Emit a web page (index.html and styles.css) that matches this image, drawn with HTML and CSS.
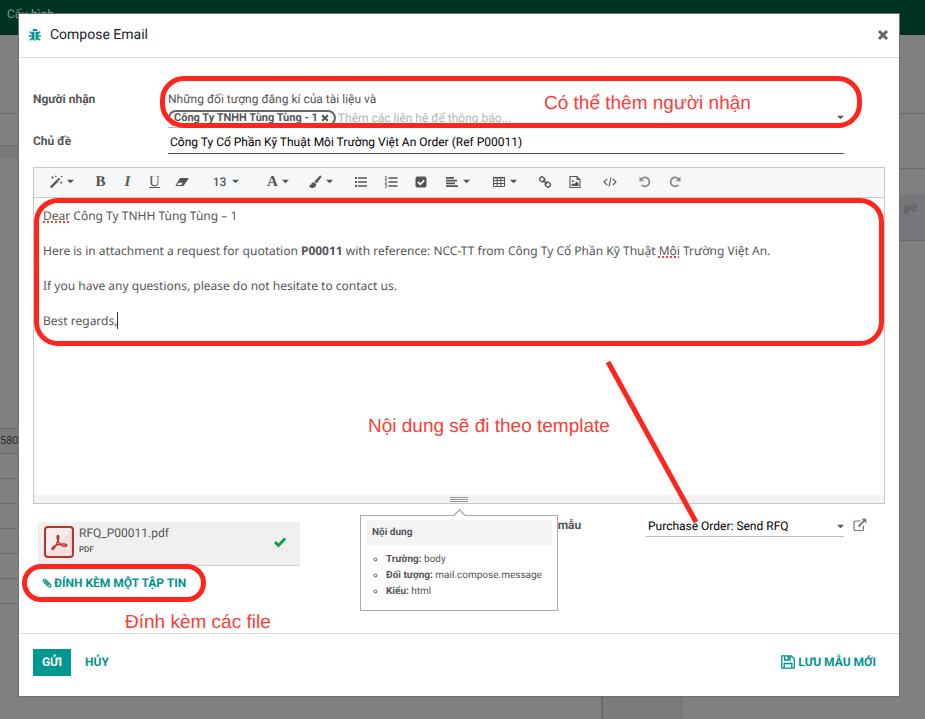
FILE: index.html
```html
<!DOCTYPE html>
<html lang="vi">
<head>
  <meta charset="UTF-8">
  <meta name="viewport" content="width=device-width, initial-scale=1.0">
  <title>Compose Email</title>
  <link rel="stylesheet" href="styles.css">
</head>
<body>
  <svg class="sprite" aria-hidden="true">
    <symbol id="bug" viewBox="0 0 14 14">
      <path d="M4.400 3.300a2.600 2.600 0 0 1 5.200 0z" fill="currentColor"/>
      <path d="M3.600 4h2.900v8.600C4.500 12.400 3.600 11 3.600 9zM7.500 4h2.900v5c0 2-.9 3.400-2.900 3.600z" fill="currentColor"/>
      <path d="M3.700 5.500L1.800 3.400M3.600 8H1M4 10.200l-2 2.100M10.300 5.500l1.900-2.100M10.400 8H13M10 10.200l2 2.100" stroke="currentColor" stroke-width="1.500" fill="none"/>
    </symbol>
    <symbol id="times" viewBox="0 0 14 14">
      <path d="M3 3l8 8M11 3l-8 8" stroke="currentColor" stroke-width="3" fill="none"/>
    </symbol>
    <symbol id="caret" viewBox="0 0 8 5">
      <path d="M0 .5h8l-4 4z" fill="currentColor"/>
    </symbol>
    <symbol id="magic" viewBox="0 0 14 14">
      <path d="M1 11.600L9.800 2.800l1.600 1.600-8.800 8.800z" fill="currentColor"/>
      <path d="M8.300 4.700l1.400 1.400" stroke="#f5f7f9" stroke-width=".8"/>
      <path d="M3.500 1.200v2.600M2.200 2.500h2.600M6.700.6v1.600M5.900 1.400h1.600M12.300 6.500v2.200M11.200 7.600h2.200M12.600.8v1.600M11.800 1.600h1.600" stroke="currentColor" stroke-width=".8"/>
    </symbol>
    <symbol id="eraser" viewBox="0 0 14 14">
      <path d="M5.400 3h7.400c.5 0 .8.500.5.900L9 10.300c-.2.400-.6.700-1 .7H1.200c-.5 0-.8-.500-.5-.9l3.900-6.400c.2-.4.400-.7.800-.7z" fill="currentColor"/>
      <path d="M1.900 10l1.500-2.300h4.200L6.200 10z" fill="#f5f7f9"/>
    </symbol>
    <symbol id="brush" viewBox="0 0 14 14">
      <path d="M12.800.7c.8.500.6 1.300.1 2L8.800 8.300 6.200 6.700l4.900-5.300c.5-.6 1.100-1 1.700-.7zM5.500 7.300l2.700 1.600c.2 2.600-1.600 4-4 4-1.800 0-3-.9-3.500-2.600 1.600.6 2.300-.3 2.600-1.200.4-1.100 1.100-1.800 2.200-1.800z" fill="currentColor"/>
    </symbol>
    <symbol id="list-ul" viewBox="0 0 14 14">
      <path d="M4 3h9M4 7h9M4 11h9" stroke="currentColor" stroke-width="1.600"/>
      <path d="M1 3h2M1 7h2M1 11h2" stroke="currentColor" stroke-width="2"/>
    </symbol>
    <symbol id="list-ol" viewBox="0 0 14 14">
      <path d="M4.500 3h9M4.500 7h9M4.500 11h9" stroke="currentColor" stroke-width="1.600"/>
      <path d="M1 1.700l1-.7v3.500M.8 4.400h2.300M.9 5.900c.7-.6 1.800-.2 1.600.6-.1.500-1.500 1.200-1.500 1.800h2M.9 9.800h1.800l-1 1.200c1.600 0 1.200 2-.9 1.600" stroke="currentColor" stroke-width=".8" fill="none"/>
    </symbol>
    <symbol id="check-square" viewBox="0 0 14 14">
      <rect x="1.500" y="1.500" width="11" height="11" rx="2" fill="currentColor"/>
      <path d="M4 7l2.300 2.300L10.200 5.300" stroke="#f5f7f9" stroke-width="1.800" fill="none"/>
    </symbol>
    <symbol id="align-left" viewBox="0 0 14 14">
      <path d="M1 2.800h8M1 5.600h11M1 8.400h9M1 11.200h12" stroke="currentColor" stroke-width="1.700"/>
    </symbol>
    <symbol id="table" viewBox="0 0 14 14">
      <path d="M1.500 2.500h11v9h-11zM1.500 5.500h11M1.500 8.500h11M5.200 2.500v9M8.800 2.500v9" stroke="currentColor" fill="none"/>
      <path d="M1.500 2.700h11" stroke="currentColor" stroke-width="1.600"/>
    </symbol>
    <symbol id="link" viewBox="0 0 14 14">
      <g stroke="currentColor" stroke-width="1.400" fill="none">
        <rect x="1.600" y="2.200" width="5.200" height="4.400" rx="2" transform="rotate(45 4.200 4.400)"/>
        <rect x="7.200" y="7.400" width="5.200" height="4.400" rx="2" transform="rotate(45 9.800 9.600)"/>
        <path d="M5 5l4 4"/>
      </g>
    </symbol>
    <symbol id="image" viewBox="0 0 14 14">
      <path d="M2 1.500h7l3 3v8H2zM9 1.500v3h3" stroke="currentColor" stroke-width="1.100" fill="none"/>
      <path d="M3.500 11V9.500l1.400-1.300 1.200 1L8.600 6.600l2 2V11z" fill="currentColor"/>
      <circle cx="4.800" cy="6" r="1" fill="currentColor"/>
    </symbol>
    <symbol id="code" viewBox="0 0 14 14">
      <path d="M4.200 3.800L1 7l3.200 3.200M9.800 3.800L13 7l-3.200 3.200M8 2.500l-2 9" stroke="currentColor" stroke-width="1.100" fill="none"/>
    </symbol>
    <symbol id="undo" viewBox="0 0 14 14">
      <path d="M3.300 4.200A4.500 4.500 0 1 1 3.600 10" stroke="currentColor" stroke-width="1.700" fill="none"/>
      <path d="M1.500 1.500v4.700h4.700z" fill="currentColor"/>
    </symbol>
    <symbol id="redo" viewBox="0 0 14 14">
      <path d="M10.700 4.200A4.500 4.500 0 1 0 10.400 10" stroke="currentColor" stroke-width="1.700" fill="none"/>
      <path d="M12.500 1.500v4.700H7.800z" fill="currentColor"/>
    </symbol>
    <symbol id="check" viewBox="0 0 14 14">
      <path d="M2 7l3.400 3.400L12.200 3.600" stroke="currentColor" stroke-width="2.800" fill="none"/>
    </symbol>
    <symbol id="clip" viewBox="0 0 12 12">
      <path d="M8.200 8.500L4 4.300c-.8-.8.300-1.900 1.100-1.100l4.900 4.900c1.700 1.700-.6 4-2.300 2.300L2.100 4.800C.2 2.800 2.700.3 4.700 2.200l5.400 5.400" stroke="currentColor" stroke-width="1.300" fill="none"/>
    </symbol>
    <symbol id="external" viewBox="0 0 14 14">
      <path d="M7.500 3H2.600C1.700 3 1 3.700 1 4.600v6.300c0 .9.700 1.600 1.600 1.600h6.300c.9 0 1.600-.7 1.600-1.600V7.800" stroke="currentColor" stroke-width="1.200" fill="none"/>
      <path d="M5.500 8.500l5.800-5.800" stroke="currentColor" stroke-width="1.800"/>
      <path d="M8.500.8h4.800v4.800z" fill="currentColor"/>
    </symbol>
    <symbol id="save" viewBox="0 0 14 14">
      <path d="M.8.800h9.400l3 3v9.400H.8zM3.200 13V8.500h7.600V13M3.600 1v4h5.600V1" stroke="currentColor" stroke-width="1.300" fill="none"/>
      <path d="M6.600 1h1.800v3H6.600z" fill="currentColor"/>
    </symbol>
  </svg>

  <div class="page">
    <nav class="navbar"><a href="#">Cấu hình</a></nav>
    <div class="page-body">
      <section class="sheet">
        <div class="sheet-bar"></div>
        <div class="sheet-status"></div>
        <div class="sheet-form"></div>
        <div class="line line-head">580,</div>
        <div class="line"></div>
        <div class="line"></div>
        <div class="line"></div>
        <div class="line"></div>
        <div class="line"></div>
        <div class="line"></div>
      </section>
      <div class="sheet-edge"></div>
      <aside class="chatter">
        <div class="chatter-bar"></div>
        <div class="chatter-tabs"></div>
        <div class="chatter-note">Bây giờ</div>
      </aside>
    </div>
  </div>

  <div class="backdrop">
    <div class="modal" role="dialog" aria-labelledby="modal-title">
      <header class="modal-header">
        <svg class="icon bug"><use href="#bug"/></svg>
        <h1 id="modal-title">Compose Email</h1>
        <button class="close" type="button" aria-label="Đóng"><svg class="icon"><use href="#times"/></svg></button>
      </header>

      <main class="modal-body">
        <div class="field-row recipients-row">
          <label for="recipients">Người nhận</label>
          <div class="field recipients">
            <p>Những đối tượng đăng kí của tài liệu và</p>
            <div class="tags">
              <span class="tag">Công Ty TNHH Tùng Tùng - 1 <svg class="tag-x"><use href="#times"/></svg></span>
              <input id="recipients" type="text" placeholder="Thêm các liên hệ để thông báo...">
              <svg class="caret"><use href="#caret"/></svg>
            </div>
          </div>
        </div>
        <div class="field-row">
          <label for="subject">Chủ đề</label>
          <input id="subject" class="field subject" type="text" value="Công Ty Cổ Phần Kỹ Thuật Môi Trường Việt An Order (Ref P00011)">
        </div>

        <div class="editor">
          <div class="toolbar">
            <div class="tools">
              <button class="menu" type="button" aria-label="Style"><svg class="icon"><use href="#magic"/></svg><svg class="caret"><use href="#caret"/></svg></button>
            </div>
            <div class="tools letters">
              <button type="button"><b>B</b></button>
              <button type="button"><b><i>I</i></b></button>
              <button type="button"><u>U</u></button>
              <button type="button" aria-label="Eraser"><svg class="icon"><use href="#eraser"/></svg></button>
            </div>
            <div class="tools">
              <button class="size" type="button">13<svg class="caret"><use href="#caret"/></svg></button>
            </div>
            <div class="tools">
              <button class="menu serif" type="button"><b>A</b><svg class="caret"><use href="#caret"/></svg></button>
              <button class="menu" type="button" aria-label="Background"><svg class="icon"><use href="#brush"/></svg><svg class="caret"><use href="#caret"/></svg></button>
            </div>
            <div class="tools">
              <button type="button" aria-label="List"><svg class="icon"><use href="#list-ul"/></svg></button>
              <button type="button" aria-label="Ordered list"><svg class="icon"><use href="#list-ol"/></svg></button>
              <button type="button" aria-label="Checklist"><svg class="icon"><use href="#check-square"/></svg></button>
              <button class="menu" type="button" aria-label="Align"><svg class="icon"><use href="#align-left"/></svg><svg class="caret"><use href="#caret"/></svg></button>
            </div>
            <div class="tools">
              <button class="menu" type="button" aria-label="Table"><svg class="icon"><use href="#table"/></svg><svg class="caret"><use href="#caret"/></svg></button>
            </div>
            <div class="tools">
              <button type="button" aria-label="Link"><svg class="icon"><use href="#link"/></svg></button>
              <button type="button" aria-label="Image"><svg class="icon"><use href="#image"/></svg></button>
            </div>
            <div class="tools">
              <button type="button" aria-label="Code"><svg class="icon"><use href="#code"/></svg></button>
            </div>
            <div class="tools history">
              <button type="button" aria-label="Undo"><svg class="icon"><use href="#undo"/></svg></button>
              <button type="button" aria-label="Redo"><svg class="icon"><use href="#redo"/></svg></button>
            </div>
          </div>
          <div class="editable" contenteditable="true" spellcheck="false">
            <p><span class="typo">Dear</span> Công Ty TNHH Tùng Tùng – 1</p>
            <p>Here is in attachment a request for quotation <b>P00011</b> with reference: NCC-TT from Công Ty Cổ Phần Kỹ Thuật <span class="typo">Môi</span> Trường Việt An.</p>
            <p>If you have any questions, please do not hesitate to contact us.</p>
            <p><span class="cursor">Best regards,</span></p>
          </div>
          <div class="resize"><span></span></div>
        </div>

        <div class="bottom">
          <div class="attachments">
            <div class="file">
              <svg class="pdf" viewBox="0 0 30 32">
                <rect x="1" y="1" width="28" height="30" rx="3" fill="#f7eceb"/>
                <path d="M2 29L28 4v24l-2 2H3z" fill="#f5dfde"/>
                <rect x="1" y="1" width="28" height="30" rx="3" fill="none" stroke="#b7342c" stroke-width="2"/>
                <path d="M14 9.500c-1.600 0-.8 3.800.6 6.500 1.500 3 4.600 4.500 7 4.300 2.200-.2 1.200-2.400-2.200-2.300-4 .1-8.300 1.400-10.300 3-2.300 1.900-.9 3.500.9 1.200 2-2.500 3.800-6.300 4.500-9.300.5-2.200.3-3.400-.5-3.400z" fill="none" stroke="#b7342c" stroke-width="1.500"/>
              </svg>
              <div class="file-info">
                <span>RFQ_P00011.pdf</span>
                <small>PDF</small>
              </div>
              <svg class="icon done"><use href="#check"/></svg>
            </div>
            <button class="attach" type="button"><svg class="clip"><use href="#clip"/></svg>ĐÍNH KÈM MỘT TẬP TIN</button>
          </div>
          <div class="template">
            <label for="template">Sử dụng mẫu</label>
            <div class="template-field">
              <input id="template" type="text" value="Purchase Order: Send RFQ">
              <svg class="caret"><use href="#caret"/></svg>
            </div>
            <button type="button" aria-label="Mở"><svg class="icon"><use href="#external"/></svg></button>
          </div>
        </div>
      </main>

      <footer class="modal-footer">
        <button class="send" type="button">GỬI</button>
        <button class="cancel" type="button">HỦY</button>
        <button class="save" type="button"><svg class="icon"><use href="#save"/></svg>LƯU MẪU MỚI</button>
      </footer>

      <div class="tooltip" role="tooltip">
        <h2>Nội dung</h2>
        <ul>
          <li><b>Trường:</b> body</li>
          <li><b>Đối tượng:</b> mail.compose.message</li>
          <li><b>Kiểu:</b> html</li>
        </ul>
      </div>

      <div class="mark mark-recipients"></div>
      <div class="mark mark-content"></div>
      <div class="mark mark-attach"></div>
      <svg class="pointer" viewBox="0 0 94 164"><path d="M3 2l88 160" stroke="#ff241c" stroke-width="5"/></svg>
      <p class="note note-recipients">Có thể thêm người nhận</p>
      <p class="note note-content">Nội dung sẽ đi theo template</p>
      <p class="note note-attach">Đính kèm các file</p>
    </div>
  </div>
</body>
</html>
```

FILE: styles.css
```css
* {
  box-sizing: border-box;
}

body {
  margin: 0;
  font-family: Roboto, "Liberation Sans", sans-serif;
  font-size: 12px;
  line-height: 18px;
  text-rendering: geometricPrecision;
  color: #555;
  background: #808080;
}

h1, h2, p, ul {
  margin: 0;
}

button, input {
  font: inherit;
  color: inherit;
  text-rendering: inherit;
  background: none;
  border: 0;
  padding: 0;
}

input {
  min-width: 0;
  outline: none;
}

.sprite {
  display: none;
}

.icon {
  width: 14px;
  height: 14px;
  flex: none;
}

.caret {
  width: 7px;
  height: 5px;
  flex: none;
}

/* page behind the dialog */
.page {
  height: 100vh;
  display: flex;
  flex-direction: column;
  overflow: hidden;
}

.navbar {
  height: 35px;
  flex: none;
  padding: 5px 7px;
  background: #003320;
}

.navbar a {
  color: #7f9a90;
  text-decoration: none;
}

.page-body {
  flex: 1;
  display: flex;
}

.sheet {
  flex: 603;
}

.sheet-bar,
.chatter-bar {
  height: 79px;
  border-bottom: 1px solid #6a6c6e;
}

.sheet-status {
  height: 32px;
  border-bottom: 1px solid #6b7073;
}

.sheet-form {
  height: 283px;
  border-top: 12px solid #787878;
  border-bottom: 1px solid #6c6c6c;
}

.line {
  height: 25px;
  border-bottom: 1px solid #6c6c6c;
}

.line-head {
  padding-top: 3px;
  font-size: 11px;
  color: #2b2b2b;
  background: #7a7a7a;
}

.sheet-edge {
  flex: 78;
  border-left: 2px solid #6a6a6a;
  background: #7c7c7c;
}

.chatter {
  flex: 244;
  border-left: 1px solid #696d71;
}

.chatter-tabs {
  height: 55px;
  border-bottom: 1px solid #6a6c6e;
}

.chatter-note {
  height: 47px;
  margin-top: 25px;
  padding: 6px 8px;
  border-bottom: 1px solid #666b6f;
  background: #74767a;
  color: #50555a;
  font-size: 10px;
  text-align: right;
}

/* dialog */
.backdrop {
  position: absolute;
  inset: 0;
  padding: 14px 26px 23px 19px;
}

.modal {
  position: relative;
  background: #fff;
  box-shadow: 0 0 0 1px #707070;
}

.modal-header {
  display: flex;
  align-items: center;
  height: 44px;
  padding: 0 9px 2px;
  border-bottom: 1px solid #dcdcdc;
}

.modal-header h1 {
  flex: 1;
  margin-left: 8px;
  font-size: 14px;
  line-height: 20px;
  font-weight: 400;
  color: #212529;
}

.bug {
  color: #00938e;
}

.close {
  display: flex;
  color: #666;
}

.modal-body {
  padding: 32px 14px 0;
  height: 575px;
}

.field-row {
  display: flex;
  margin-right: 41px;
}

.field-row label,
.template label {
  font-weight: 700;
}

.field-row label {
  width: 135px;
  flex: none;
}

.field {
  flex: 1;
}

.recipients {
  border-bottom: 1px solid #bbb;
}

.tags {
  display: flex;
  align-items: center;
  height: 19px;
}

.tag {
  display: flex;
  align-items: center;
  height: 16px;
  padding: 0 4px;
  border: 2px solid #666;
  border-radius: 8px;
  font-size: 11px;
  font-weight: 700;
}

.tag-x {
  width: 10px;
  height: 10px;
  margin-left: 2px;
}

.tags input {
  flex: 1;
  margin-left: 2px;
}

.tags input::placeholder {
  color: #b5b5b5;
}

.recipients-row {
  margin-bottom: 4px;
}

.subject {
  height: 22px;
  padding: 0 2px 2px;
  border-bottom: 1px solid #555;
  color: #000;
}

.editor {
  margin-top: 13px;
  border: 1px solid #c5cacf;
}

.toolbar {
  display: flex;
  gap: 5px;
  height: 30px;
  padding: 0 6px 2px;
  background: #f5f7f9;
  border-bottom: 1px solid #c5cacf;
}

.tools {
  display: flex;
}

.tools button {
  display: flex;
  align-items: center;
  justify-content: center;
  gap: 4px;
  width: 30px;
}

.tools .menu {
  width: 42px;
}

.tools .size {
  width: 52px;
  gap: 6px;
  font-weight: 500;
}

.letters,
.tools .serif {
  font-family: "Liberation Serif", serif;
  font-size: 15px;
}

.letters button {
  width: 27px;
}

.history {
  color: #888;
}

.editable {
  height: 297px;
  padding: 9px;
  font-family: "Noto Sans", sans-serif;
  outline: none;
}

.editable p {
  margin-bottom: 17px;
}

.typo {
  text-decoration: underline dotted #ff3b30 2px;
}

.cursor {
  border-right: 1px solid #333;
}

.resize {
  display: flex;
  justify-content: center;
  padding-top: 2px;
  height: 8px;
  background: #f3f3f3;
}

.resize span {
  width: 18px;
  height: 5px;
  border-top: 1px solid #999;
  border-bottom: 1px solid #999;
  background: linear-gradient(#f3f3f3 1px, #999 1px, #999 2px, #f3f3f3 2px);
}

.bottom {
  display: flex;
  justify-content: space-between;
  align-items: flex-start;
  padding-top: 12px;
}

.attachments {
  width: 262px;
  margin: 6px 5px 0;
}

.file {
  display: flex;
  height: 44px;
  padding: 4px 13px 0 6px;
  border-bottom: 1px solid #ccc;
  border-radius: 2px;
  background: #efefef;
}

.pdf {
  width: 30px;
  height: 32px;
}

.file-info {
  flex: 1;
  display: flex;
  flex-direction: column;
  margin-left: 5px;
  line-height: 14px;
}

.file-info small {
  font-size: 8px;
  font-weight: 500;
  line-height: 20px;
}

.done {
  margin-top: 9px;
  color: #00a04a;
}

.attach {
  display: flex;
  align-items: center;
  margin-top: 8px;
  padding: 0 4px;
  color: #00938e;
  font-weight: 700;
}

.clip {
  width: 10px;
  height: 10px;
  margin-right: 2px;
}

.template {
  display: flex;
  width: 375px;
  padding-right: 18px;
}

.template label {
  flex: 1;
}

.template-field {
  display: flex;
  align-items: center;
  width: 198px;
  height: 21px;
  padding-left: 2px;
  border-bottom: 1px solid #bbb;
}

.template-field input {
  flex: 1;
  color: #000;
}

.template button {
  display: flex;
  align-items: center;
  margin-left: 9px;
  height: 18px;
}

.template .icon {
  color: #6c757d;
}

.modal-footer {
  display: flex;
  align-items: center;
  height: 63px;
  padding: 0 23px 6px 14px;
  border-top: 1px solid #dcdcdc;
  color: #00938e;
}

.modal-footer button {
  font-weight: 700;
}

.modal-footer .send {
  width: 38px;
  height: 27px;
  background: #009890;
  color: #fff;
}

.cancel {
  margin-left: 14px;
}

.save {
  display: flex;
  align-items: center;
  gap: 3px;
  margin-left: auto;
}

/* field tooltip */
.tooltip {
  position: absolute;
  left: 341px;
  top: 501px;
  width: 198px;
  height: 96px;
  padding: 4px 5px;
  border: 1px solid #aaa;
  background: #fff;
  font-size: 10px;
  line-height: 16px;
  white-space: nowrap;
}

.tooltip::before {
  content: "";
  position: absolute;
  left: 94px;
  top: -5px;
  width: 8px;
  height: 8px;
  border: solid #888;
  border-width: 1px 0 0 1px;
  background: #fff;
  transform: rotate(45deg);
}

.tooltip h2 {
  position: relative;
  padding: 5px 6px 4px;
  background: #f5f5f5;
  font-size: 10px;
}

.tooltip ul {
  margin-top: 7px;
  padding-left: 20px;
  list-style: circle;
}

/* red annotations over the dialog */
.mark {
  position: absolute;
  border: 5px solid #ff241c;
  border-radius: 24px;
  pointer-events: none;
}

.mark-recipients {
  left: 141px;
  top: 62px;
  width: 702px;
  height: 52px;
}

.mark-content {
  left: 15px;
  top: 184px;
  width: 850px;
  height: 148px;
}

.mark-attach {
  left: 3px;
  top: 550px;
  width: 184px;
  height: 38px;
}

.pointer {
  position: absolute;
  left: 586px;
  top: 346px;
  width: 94px;
  height: 164px;
  pointer-events: none;
}

.note {
  position: absolute;
  color: #ff3b35;
  font-family: "Liberation Sans", sans-serif;
  font-size: 19px;
  line-height: 22px;
  white-space: nowrap;
}

.note-recipients {
  left: 525px;
  top: 79px;
}

.note-content {
  left: 349px;
  top: 402px;
}

.note-attach {
  left: 106px;
  top: 598px;
}
```
